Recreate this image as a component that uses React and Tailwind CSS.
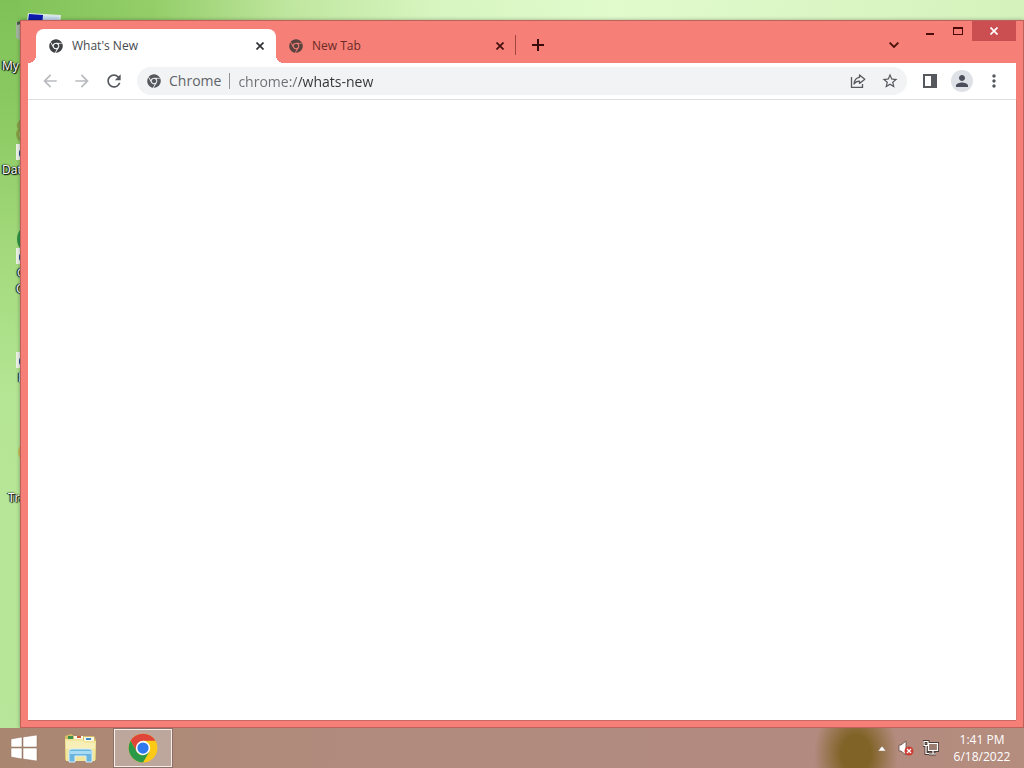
import React, { useState } from 'react';
import { FaChrome } from 'react-icons/fa';
import { MdStarBorder, MdArrowBack, MdArrowForward, MdRefresh, MdPerson, MdMoreVert } from 'react-icons/md';

const labelStyle =
  "absolute whitespace-nowrap text-xs text-white [text-shadow:1px_1px_1px_#000,0_0_2px_#000,-1px_0_1px_#000]";

function Shortcut({ className }) {
  return (
    <svg className={className} width="16" height="16" viewBox="0 0 16 16">
      <rect width="16" height="16" fill="#eef3e8" />
      <path d="M3 13V8q0-3 5-3V2l5 5-5 4V8Q5 8 3 13z" fill="#1f4f8f" />
    </svg>
  );
}

function DesktopIcons() {
  return (
    <>
      <svg className="absolute left-4 top-3" width="48" height="40" viewBox="0 0 48 40">
        <path d="M0 10h8v20l-8-4z" fill="#a5b5a0" />
        <path d="M1 10l4-1v3l-4 1z" fill="#4d5a4a" />
        <path d="M12 1l33 2-2 22H9z" fill="#d9e8e4" />
        <path d="M13 2l14 1-1 20H10z" fill="#0b1cae" />
        <path d="M27 4l16 1-1 18H26z" fill="#c5d9ee" />
      </svg>
      <span className={`${labelStyle} left-0.5 top-[58px]`}>My Computer</span>

      <svg className="absolute left-4 top-30" width="16" height="26" viewBox="0 0 16 26">
        <path d="M5 1Q0 5 4 9Q-1 14 4 20" fill="none" stroke="#88a247" strokeWidth="3" />
      </svg>
      <Shortcut className="absolute left-4 top-36" />
      <span className={`${labelStyle} left-0.5 top-[162px]`}>Database</span>

      <svg className="absolute left-4 top-56" width="30" height="30" viewBox="0 0 30 30">
        <circle cx="16" cy="15" r="15" fill="#2d9445" />
      </svg>
      <Shortcut className="absolute left-4 top-62" />
      <span className={`${labelStyle} left-[17px] top-[265px]`}>Google</span>
      <span className={`${labelStyle} left-4 top-[281px]`}>Chrome</span>

      <Shortcut className="absolute left-4 top-88" />
      <span className={`${labelStyle} left-[18px] top-[370px]`}>Firefox</span>

      <svg className="absolute left-4 top-110" width="24" height="24" viewBox="0 0 24 24">
        <circle cx="13" cy="12" r="11" fill="#c9c25c" />
      </svg>
      <span className={`${labelStyle} left-2 top-[490px]`}>Trash</span>
    </>
  );
}

function CloseGlyph() {
  return (
    <svg width="8" height="8" viewBox="0 0 8 8" stroke="currentColor" strokeWidth="1.7">
      <path d="M0.5 0.5l7 7M7.5 0.5l-7 7" />
    </svg>
  );
}

function Tab({ title, active, onSelect }) {
  return (
    <div
      className={`relative flex h-[34px] w-60 items-center pr-2 pl-3 ${
        active ? 'rounded-t-lg bg-white text-[#45494d]' : 'text-[#6b2a26]'
      }`}
    >
      {active && (
        <>
          <span className="absolute bottom-0 -left-2 size-2 bg-[radial-gradient(circle_at_0_0,transparent_8px,#fff_8px)]" />
          <span className="absolute -right-2 bottom-0 size-2 bg-[radial-gradient(circle_at_100%_0,transparent_8px,#fff_8px)]" />
        </>
      )}
      <button className="flex flex-1 items-center gap-2 text-left text-xs" onClick={onSelect}>
        <FaChrome className={active ? 'size-4 p-px text-[#404346]' : 'size-4 p-px text-[#5a423f]'} />
        {title}
      </button>
      <button
        aria-label={`Close ${title}`}
        className={`flex size-4 items-center justify-center ${active ? 'text-[#303336]' : 'text-[#42100d]'}`}
      >
        <CloseGlyph />
      </button>
    </div>
  );
}

function TabStrip() {
  const [current, setCurrent] = useState(0);
  return (
    <div className="flex h-[42px] items-end pl-2">
      <Tab title="What's New" active={current === 0} onSelect={() => setCurrent(0)} />
      <Tab title="New Tab" active={current === 1} onSelect={() => setCurrent(1)} />
      <div className="mb-2 -ml-px h-5 w-px bg-[#a24740]" />
      <button aria-label="New tab" className="mb-1 ml-2 flex size-7 items-center justify-center text-[#3a0c09]">
        <svg width="12" height="12" viewBox="0 0 12 12" stroke="currentColor" strokeWidth="2">
          <path d="M6 0v12M0 6h12" />
        </svg>
      </button>
      <button aria-label="Search tabs" className="mr-2 mb-1 ml-auto flex size-7 items-center justify-center text-[#4a100c]">
        <svg width="10" height="6" viewBox="0 0 10 6" fill="none" stroke="currentColor" strokeWidth="1.8">
          <path d="M0.6 0.6L5 5L9.4 0.6" />
        </svg>
      </button>
      <div className="flex self-start text-[#4a0b08]">
        <button aria-label="Minimize" className="flex h-5 w-7 items-center justify-center">
          <svg width="8" height="8" viewBox="0 0 8 8">
            <path d="M0 6h8v2H0z" fill="currentColor" />
          </svg>
        </button>
        <button aria-label="Maximize" className="flex h-5 w-7 items-center justify-center">
          <svg width="10" height="8" viewBox="0 0 10 8">
            <path d="M0 0h10v8H0zM1 2v5h8V2z" fill="currentColor" fillRule="evenodd" />
          </svg>
        </button>
        <button aria-label="Close" className="flex h-5 w-11 items-center justify-center bg-[#cb4f50] text-white">
          <CloseGlyph />
        </button>
      </div>
    </div>
  );
}

const toolButton = 'flex h-7 w-8 shrink-0 items-center justify-center text-[#55585d]';

function Toolbar() {
  const [url, setUrl] = useState('chrome://whats-new');
  return (
    <div className="flex h-[37px] items-center border-b border-[#dcdee1] bg-white px-1.5">
      <button aria-label="Back" className={`${toolButton} text-[#b9bbbe]`}>
        <MdArrowBack className="size-5" />
      </button>
      <button aria-label="Forward" className={`${toolButton} text-[#b9bbbe]`}>
        <MdArrowForward className="size-5" />
      </button>
      <button aria-label="Reload" className={toolButton}>
        <MdRefresh className="size-5" />
      </button>
      <div className="mr-[7px] ml-[7px] flex h-7 flex-1 items-center rounded-full bg-[#f1f3f4] pr-px pl-2.5 text-sm text-[#5f6368]">
        <FaChrome className="size-3.5 text-[#55585d]" />
        <label htmlFor="address" className="ml-2">
          Chrome
        </label>
        <div className="mx-2 h-4 w-px bg-[#909397]" />
        <input
          id="address"
          value={url}
          onChange={e => setUrl(e.target.value)}
          className="h-7 min-w-0 flex-1 bg-[linear-gradient(90deg,#6b6f74_61px,#303236_61px)] bg-clip-text text-transparent caret-black outline-none"
        />
        <button aria-label="Share" className={toolButton}>
          <svg width="16" height="16" viewBox="0 0 16 16" fill="none" stroke="currentColor" strokeWidth="1.3">
            <path d="M1.5 4v10.3h11V11" />
            <path d="M9.5 2l5.3 4.2-5.3 4.2V8.1Q6 8 4 11Q4.500 5 9.500 4.300z" strokeLinejoin="round" />
          </svg>
        </button>
        <button aria-label="Bookmark" className={toolButton}>
          <MdStarBorder className="size-[18px]" />
        </button>
      </div>
      <button aria-label="Side panel" className={toolButton}>
        <svg width="14" height="14" viewBox="0 0 14 14">
          <path d="M0 0h14v14H0zM2 2v10h6V2z" fill="currentColor" fillRule="evenodd" />
        </svg>
      </button>
      <button aria-label="Profile" className={toolButton}>
        <span className="flex size-[22px] items-center justify-center rounded-full bg-[#dee1e6]">
          <MdPerson className="size-[18px] text-[#4a4f5b]" />
        </span>
      </button>
      <button aria-label="Menu" className={toolButton}>
        <MdMoreVert className="size-5" />
      </button>
    </div>
  );
}

function BrowserWindow() {
  return (
    <div className="absolute top-5 right-0 bottom-0 left-5 flex flex-col border border-[#bd625a] bg-[#f67f77] px-[7px] pb-[7px] shadow-[0_0_4px_#0005]">
      <TabStrip />
      <Toolbar />
      <main className="flex-1 bg-white shadow-[0_1px_0_#c86862,1px_0_0_#d97973]" />
    </div>
  );
}

function ExplorerIcon() {
  return (
    <svg width="34" height="30" viewBox="0 0 34 30">
      <path d="M1 3l6-2 3 2h20l2 4v20H1z" fill="#d6bd68" />
      <path d="M4 3h5v4H4z" fill="#3f8e4c" />
      <path d="M10 3h9v4h-9zM20 4h10v5H20z" fill="#faf6e6" />
      <path d="M13 3h4v2h-4z" fill="#c9563a" />
      <path d="M22 5h5v2h-5z" fill="#3d8bc0" />
      <path d="M1 6h17l3 2h11l-1 20H2z" fill="#f2e59c" />
      <path d="M2 8h16l3 2h10v6H2z" fill="#f8efb8" />
      <path d="M5 29V18q0-2 3-2h17q3 0 3 2v11h-6v-6H11v6z" fill="#69b5df" stroke="#d5effa" />
      <path d="M6 18h21v3H6z" fill="#a9dcf3" />
    </svg>
  );
}

function ChromeIcon() {
  return (
    <svg width="30" height="30" viewBox="0 0 48 48">
      <circle cx="24" cy="24" r="23" fill="#fbc916" />
      <path d="M4.100 12.500A23 23 0 0 1 43.900 12.500H24L14 29.800z" fill="#df4538" />
      <path d="M4.100 12.500L14 29.800Q18 35.500 24 35.500L34 29.800L24 47A23 23 0 0 1 4.100 12.500z" fill="#2b9a48" />
      <circle cx="24" cy="24" r="11.500" fill="#fff" />
      <circle cx="24" cy="24" r="9" fill="#2f78ed" />
    </svg>
  );
}

function Taskbar() {
  return (
    <footer className="flex h-10 items-center bg-[radial-gradient(ellipse_42px_54px_at_856px_26px,#806327_35%,#80632700_100%),linear-gradient(90deg,#a98670,#b08b7c_25%,#b28a80_75%,#b48d7e)] text-white">
      <button aria-label="Start" className="flex h-10 w-12 items-center justify-center">
        <svg width="28" height="26" viewBox="0 0 28 26" fill="#fff" stroke="#8c6c5a" strokeWidth="0.500">
          <path d="M1 4l11-2v10H1zM13 2l14-2v12H13zM1 13h11v11L1 22zM13 13h14v13l-14-2z" />
        </svg>
      </button>
      <button aria-label="File Explorer" className="flex h-10 w-[65px] items-center justify-center">
        <ExplorerIcon />
      </button>
      <button
        aria-label="Google Chrome"
        className="flex h-10 w-15 items-center justify-center border border-[#8c7067] bg-[#bda69b] shadow-[inset_0_0_0_1px_#f5eee9]"
      >
        <ChromeIcon />
      </button>
      <div className="ml-auto flex items-center">
        <button aria-label="Show hidden icons" className="flex h-10 w-6 items-center justify-center">
          <svg width="8" height="5" viewBox="0 0 8 5">
            <path d="M0 5l4-5 4 5z" fill="#fff" stroke="#6d554b" strokeWidth="0.400" />
          </svg>
        </button>
        <button aria-label="Volume" className="flex h-10 w-6 items-center justify-center">
          <svg width="16" height="16" viewBox="0 0 16 16">
            <path d="M1 5h2l5-4v14l-5-4H1z" fill="#fff" stroke="#5f4a42" strokeWidth="0.800" />
            <circle cx="11" cy="11" r="4.500" fill="#cc3e35" />
            <path d="M9 9l4 4M13 9l-4 4" stroke="#fff" strokeWidth="1.300" />
          </svg>
        </button>
        <button aria-label="Network" className="flex h-10 w-[26px] items-center justify-center">
          <svg width="16" height="16" viewBox="0 0 16 16" fill="none">
            <path d="M5.500 3.500h9v7h-9zM10 11v3M6 14h7M3 6v7.500h3M1 1.500h4v4H1z" stroke="#4d3c35" strokeWidth="3" />
            <path d="M5.500 3.500h9v7h-9z" fill="#9a7c71" />
            <path d="M5.500 3.500h9v7h-9zM10 11v3M6 14h7M3 6v7.500h3M1 1.500h4v4H1z" stroke="#fff" strokeWidth="1.200" />
          </svg>
        </button>
        <button className="w-[76px] text-center text-xs leading-[17px]">
          1:41 PM
          <br />
          6/18/2022
        </button>
        <div className="w-1" />
      </div>
    </footer>
  );
}

function App() {
  return (
    <div className="flex h-screen flex-col overflow-hidden font-['Open_Sans','Noto_Sans',sans-serif]">
      <div className="relative flex-1 overflow-hidden bg-[linear-gradient(90deg,#7fc157_0%,#94ce69_15%,#bfe69e_28%,#d6f5bf_42%,#e1fbcd_60%,#d5f2bc_100%)]">
        <div className="absolute inset-y-0 left-0 w-5 bg-[linear-gradient(180deg,#7fc157_0%,#8cca63_16%,#a4da7d_35%,#b5e695_55%,#b8e69a_100%)]" />
        <DesktopIcons />
        <BrowserWindow />
      </div>
      <Taskbar />
    </div>
  );
}

export default App;
